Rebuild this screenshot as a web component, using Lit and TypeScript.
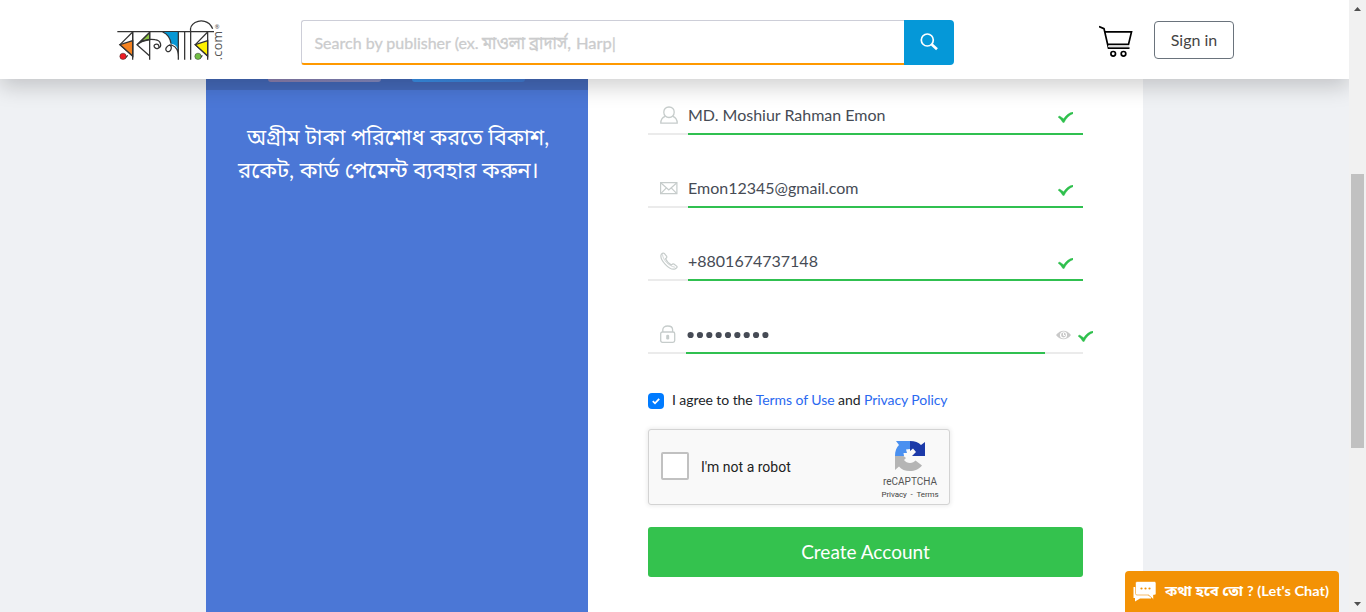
import { LitElement, html, css, svg } from "lit";
import { customElement } from "lit/decorators.js";

const tick = html`<svg class="tick" viewBox="0 0 45 33" width="15" height="11">
  <path d="M0 15 L5 12 L17 20 C24 10 33 2 45 0 L45 5 C34 9 25 18 18 32 L14 31 C11 25 6 20 0 15 Z" fill="#2fc04d" stroke="#2fc04d" />
</svg>`;

const icons = {
  user: svg`<g fill="none" stroke="#c6cccb" stroke-width="1.3"><path d="M9 1C5.600 1 3.800 3.300 3.800 6.200S6 11.500 9 11.500s5.200-2.400 5.200-5.300S12.400 1 9 1z"/><path d="M5.200 10.300C2.500 11.200.8 13 .8 17.100h16.400c0-4.100-1.700-5.900-4.400-6.800"/></g>`,
  mail: svg`<g fill="none" stroke="#c6cccb" stroke-width="1.2"><path d="M.6 3.600h16.300v11H.6z"/><path d="M1 4l7.800 7 7.800-7M1 14.300l5.400-5.400M16.600 14.300l-5.400-5.400"/></g>`,
  phone: svg`<g fill="none" stroke="#c6cccb" stroke-width="1.200"><path d="M1 3.100C.5 5.300 2.200 9 5.300 12.300s7.200 5.600 9.800 4.600c1.500-.7 2.400-1.700 1.800-2.600l-3-2.300c-.8-.5-1.600 0-2.400 1-2.300-1-4.600-3.500-6-6.300 1.200-.7 1.600-1.500 1.200-2.300L4.300 1.400C3.300.4 1.300 1.800 1 3.100z"/><path d="M2.500 2.400c.2 4.800 5.500 11.500 12.600 12.900" stroke-width=".8"/></g>`,
  lock: svg`<g fill="none" stroke="#c6cccb" stroke-width="1.300"><rect x=".7" y="7" width="14" height="10.300" rx="1.700"/><path d="M2.800 7V4.800C2.800 2.400 4.800 1 7.700 1s4.900 1.400 4.900 3.800V7"/></g><rect x="6.200" y="9.700" width="3" height="4.800" rx="1.200" fill="#c6cccb"/>`,
};

@customElement("app-root")
export class AppRoot extends LitElement {
  static styles = css`
    :host { display: block; height: 612px; overflow: hidden; background: #eff1f4; font-family: Lato, "Noto Sans Bengali", sans-serif; color: #464b55; }
    * { box-sizing: border-box; }
    svg { display: block; flex: none; }
    .frame { display: flex; height: 612px; }
    .page { width: 1349px; display: flex; flex-direction: column; }
    .header { height: 79px; flex: none; background: #fff; display: flex; align-items: flex-start; padding: 20px 115px 0 117px; z-index: 2; box-shadow: 0 8px 20px rgba(0, 0, 0, 0.18); clip-path: inset(0 0 -40px 0); }
    .logo { margin-top: -1px; }
    .search { display: flex; width: 653px; height: 45px; margin-left: 75px; }
    .query { width: 603px; border: 1px solid #cdced8; border-right: 0; border-bottom: 2px solid #f90; border-radius: 3px 0 0 3px; padding: 3px 0 0 12px; display: flex; align-items: center; font-size: 16px; }
    .go { width: 50px; background: #0598d8; border-radius: 0 4px 4px 0; display: flex; align-items: center; justify-content: center; padding-bottom: 2px; }
    .cart { margin: 5px 0 0 145px; }
    .signin { margin: 1px 0 0 21px; width: 80px; height: 38px; border: 1px solid #6a737c; border-radius: 4px; display: flex; align-items: center; justify-content: center; padding-bottom: 2px; font-size: 16px; color: #444; }
    .card { flex: 1; width: 937px; margin-left: 206px; display: flex; background: #fff; }
    .promo { width: 382px; background: #4b77d6; }
    .banner { height: 11px; background: #4469b9; display: flex; gap: 31px; padding-left: 62px; }
    .chip { height: 3px; border-radius: 0 0 6px 6px; }
    .rose { width: 113px; background: linear-gradient(90deg, #8d80af, #858bc2); }
    .sky { width: 113px; background: linear-gradient(90deg, #3992eb, #417bd3); }
    .slogan { margin-top: 28px; }
    .form { width: 555px; padding: 16px 0 0 60px; }
    .field { height: 40px; margin-bottom: 33px; display: flex; width: 450px; }
    .icon { width: 40px; border-bottom: 2px solid #ebebeb; padding: 11px 0 0 12px; }
    .value { width: 395px; border-bottom: 2px solid #30c050; display: flex; justify-content: space-between; align-items: center; padding-right: 10px; font-size: 16px; }
    .value .tick { margin-top: 6px; }
    .secret .icon { width: 38px; }
    .secret .value { width: 359px; padding: 2px 0 0; justify-content: flex-start; }
    .eye { width: 38px; border-bottom: 2px solid #ebebeb; padding: 16px 0 0 11px; }
    .secret > .tick { margin: 17px 0 0 -5px; }
    .agree { display: flex; align-items: center; height: 20px; margin-top: 35px; font-size: 14px; letter-spacing: -0.07px; color: #212529; white-space: pre; }
    .box { width: 16px; height: 16px; border-radius: 4px; background: #007bff; margin: 4px 8px 0 0; display: flex; align-items: center; justify-content: center; }
    .link { color: #2a69f0; }
    .captcha { width: 302px; height: 76px; margin-top: 20px; border: 1px solid #d3d3d3; border-radius: 3px; background: #f9f9f9; box-shadow: 0 0 4px 1px rgba(0, 0, 0, 0.08); font-family: Roboto, sans-serif; display: flex; }
    .check { width: 28px; height: 28px; margin: 22px 0 0 12px; border: 2px solid #c1c1c1; border-radius: 2px; background: #fff; }
    .robot { width: 170px; margin: 29px 0 0 12px; font-size: 14px; line-height: 17px; color: #222; }
    .brand { width: 78px; display: flex; flex-direction: column; align-items: center; padding-top: 10px; color: #555; }
    .name { font-size: 10px; line-height: 10px; margin-top: 5px; }
    .legal { font-size: 8px; line-height: 10px; margin-top: 3px; white-space: pre; letter-spacing: -0.07px; color: #444; }
    .submit { width: 435px; height: 50px; margin-top: 22px; background: #34c24e; border-radius: 3px; color: #fff; font-size: 19px; display: flex; align-items: center; justify-content: center; padding-bottom: 1px; }
    .chat { position: absolute; left: 1125px; top: 571px; width: 214px; height: 41px; z-index: 3; background: #f39205; border-radius: 4px 4px 0 0; padding: 10px 0 0 7px; display: flex; }
    .scroll { width: 17px; background: #f1f1f1; display: flex; flex-direction: column; align-items: center; justify-content: space-between; padding: 7px 0 6px; }
    .thumb { width: 13px; height: 274px; margin-top: 3px; background: #c1c1c1; }
    .lane { flex: 1; padding-top: 160px; }
  `;

  field(name: keyof typeof icons, text: string) {
    return html`<div class="field">
      <div class="icon"><svg width="18" height="18" viewBox="0 0 18 18">${icons[name]}</svg></div>
      <div class="value"><span>${text}</span>${tick}</div>
    </div>`;
  }

  render() {
    return html`<div class="frame">
      <div class="page">
        <div class="header">
          <svg class="logo" width="109" height="44" viewBox="51 27 327 132">
            <g fill="none" stroke="#333" stroke-width="3.800">
              <path d="M52 65H342" />
              <path d="M98 66L60 104L98 138V66" />
              <path d="M60 104L98 92V138Z" fill="#f48220" />
              <path d="M98 66V149M149 66V149M150 66L111 104L149 138" />
              <path d="M149 68V89L122 95Z" fill="#8cc63f" />
              <path d="M111 104C128 91 148 86 165 89C184 91 187 111 174 115C164 118 158 106 166 103C173 100 179 106 176 113" />
              <path d="M188 66H235V128C233 105 221 102 213 101C211 85 202 73 188 66Z" fill="#0798d5" stroke="none" />
              <path d="M235 66V149C236 121 230 110 215 105C201 104 192 118 201 124C211 129 220 111 208 104M213 101C211 86 204 73 188 66" />
              <path d="M254 66V149M272 149V66C267 38 298 29 314 34C326 37 333 45 338 56" />
              <path d="M323 66L286 104L323 138V66V149" />
              <path d="M286 104L323 92V138Z" fill="#fff200" />
              <path d="M75 145L83 136M300 145L307 136" />
            </g>
            <circle cx="69" cy="139" r="9.500" fill="#ed1c24" stroke="#333" stroke-width="1.500" />
            <circle cx="294" cy="139" r="9.500" fill="#72bf44" stroke="#333" stroke-width="1.500" />
            <text transform="translate(366 151) rotate(-90)" font-family="Open Sans" font-size="37" fill="#555" textLength="88">.com</text>
            <text x="344" y="57" font-family="Open Sans" font-size="17" fill="#444">®</text>
          </svg>
          <div class="search">
            <div class="query"><svg width="306" height="34" viewBox="0 0 306 34" fill="#cbcccd" stroke="#cbcccd" stroke-width=".3">
              <text x="0.500" y="22" textLength="164" lengthAdjust="spacingAndGlyphs">Search by publisher (ex.</text>
              <text x="168" y="22" textLength="89" lengthAdjust="spacingAndGlyphs" font-size="17">মাওলা ব্রাদার্স,</text>
              <text x="262" y="22" textLength="40" lengthAdjust="spacingAndGlyphs">Harp|</text>
            </svg></div>
            <div class="go"><svg width="20" height="20" viewBox="0 0 20 20" fill="none" stroke="#fff"><circle cx="8.300" cy="8" r="6" stroke-width="1.700"/><path d="M12.800 12.500L18 17.300" stroke-width="2.600"/></svg></div>
          </div>
          <svg class="cart" width="34" height="33" viewBox="0 0 34 33" fill="none" stroke="#000" stroke-width="1.700">
            <path d="M0 1.500L5 3.600L9.500 23.200H30.500M6 6.900H32.500L29.500 19.400H8.600" /><path d="M9 21.300H30" stroke="#ddd" />
            <circle cx="14.200" cy="28.800" r="2.300" /><circle cx="24.500" cy="28.800" r="2.300" />
          </svg>
          <div class="signin">Sign in</div>
        </div>
        <div class="card">
          <div class="promo">
            <div class="banner"><div class="chip rose"></div><div class="chip sky"></div></div>
            <svg class="slogan" width="382" height="80" viewBox="0 0 382 80" fill="#fff" font-size="23">
              <text x="41" y="27" textLength="302" lengthAdjust="spacingAndGlyphs">অগ্রীম টাকা পরিশোধ করতে বিকাশ,</text>
              <text x="32" y="60" textLength="301" lengthAdjust="spacingAndGlyphs">রকেট, কার্ড পেমেন্ট ব্যবহার করুন।</text>
            </svg>
          </div>
          <div class="form">
            ${this.field("user", "MD. Moshiur Rahman Emon")}
            ${this.field("mail", "Emon12345@gmail.com")}
            ${this.field("phone", "+8801674737148")}
            <div class="field secret">
              <div class="icon"><svg width="18" height="18" viewBox="0 0 18 18">${icons.lock}</svg></div>
              <div class="value"><svg width="90" height="10" fill="#464b55">${Array.from({ length: 9 }, (_, i) => svg`<circle cx=${4.600 + i * 9.350} cy="6" r="3.100"/>`)}</svg></div>
              <div class="eye"><svg width="15" height="10" viewBox="0 0 15 10"><path d="M0 5Q3.500 .7 7.500 .7T15 5Q11.500 9.300 7.500 9.300T0 5z" fill="#c9c9c9"/><circle cx="7.500" cy="5" r="3" fill="none" stroke="#fff" stroke-width="1.200"/><path d="M7.500 3v2.500H9" stroke="#fff" fill="none"/></svg></div>
              ${tick}
            </div>
            <div class="agree"><span class="box"><svg width="8" height="8" viewBox="0 0 8 8"><path d="M.8 4.200L3 6.300L7.200 1.800" fill="none" stroke="#fff" stroke-width="1.800"/></svg></span><span>I agree to the <span class="link">Terms of Use</span> and <span class="link">Privacy Policy</span></span></div>
            <div class="captcha">
              <div class="check"></div>
              <div class="robot">I'm not a robot</div>
              <div class="brand">
                <svg width="32" height="32" viewBox="0 0 32 32">
                  <path d="M16 1V9L12 9.500L13 13L9.500 13L10 16H1C1 11 2.500 7.500 5 5L2 1Z" fill="#4a90f0"/>
                  <path d="M16 1C21 1 24.500 2.500 27 5L31 2V16H18L22 12L19 8.500L16 11Z" fill="#1c3aa9"/>
                  <path d="M1 16H9.500L12 18L10 20C11.500 22 13.500 23 16 23C18.500 23 20 22 21.500 20.500L28 25.500C24.500 29.500 21 31 16 31C11 31 7.500 29.500 5 26.500L1 30Z" fill="#b5b5b5"/>
                </svg>
                <div class="name">reCAPTCHA</div>
                <div class="legal">Privacy  -  Terms</div>
              </div>
            </div>
            <div class="submit">Create Account</div>
          </div>
        </div>
      </div>
      <div class="scroll">
        <svg width="7" height="4" viewBox="0 0 7 4"><path d="M0 4L3.500 0L7 4z" fill="#505050"/></svg>
        <div class="lane"><div class="thumb"></div></div>
        <svg width="7" height="4" viewBox="0 0 7 4"><path d="M0 0L3.500 4L7 0z" fill="#505050"/></svg>
      </div>
      <div class="chat">
        <svg width="26" height="21" viewBox="0 0 26 21"><path d="M3 6H1.500V17H3v3.500L8 17.500H19V16" fill="#fff"/><path d="M5 .5H22.500Q24 .5 24 2V12.500Q24 14 22.500 14H21.500V18.500L16.500 14H5Q3.500 14 3.500 12.500V2Q3.500 .5 5 .5z" fill="#fff" stroke="#f39205" stroke-width=".6"/><g fill="#f39205"><circle cx="9.500" cy="7.500" r="1.100"/><circle cx="13.500" cy="7.500" r="1.100"/><circle cx="17.500" cy="7.500" r="1.100"/></g></svg>
        <svg width="180" height="26" viewBox="0 0 180 26" fill="#fff" font-size="14" font-weight="700">
          <text x="7" y="15" textLength="78" lengthAdjust="spacingAndGlyphs">কথা হবে তো</text>
          <text x="89" y="15" textLength="82" lengthAdjust="spacingAndGlyphs">? (Let's Chat)</text>
        </svg>
      </div>
    </div>`;
  }
}
